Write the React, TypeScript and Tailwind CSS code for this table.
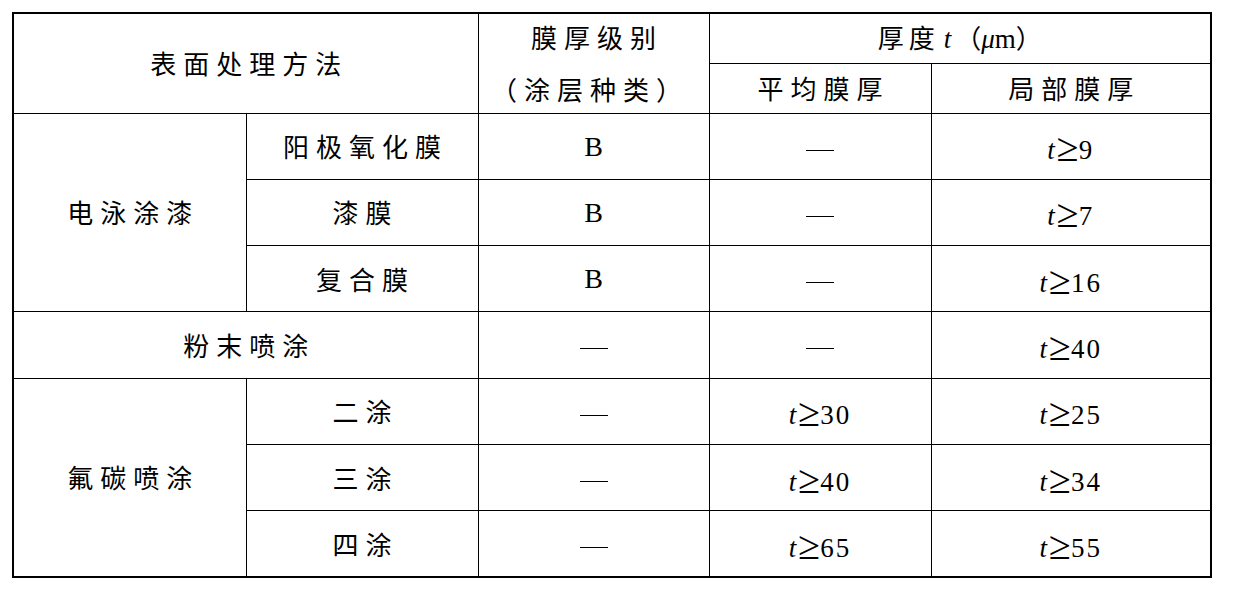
import React from 'react';

const CJK = '"Noto Sans CJK SC", "Liberation Serif", serif';

type Row = { name?: string; span?: number; sub?: string; level: string; avg: string; local: string; merged?: string };

const ROWS: Row[] = [
  { name: '电泳涂漆', span: 3, sub: '阳极氧化膜', level: 'B', avg: '—', local: '9' },
  { sub: '漆膜', level: 'B', avg: '—', local: '7' },
  { sub: '复合膜', level: 'B', avg: '—', local: '16' },
  { merged: '粉末喷涂', level: '—', avg: '—', local: '40' },
  { name: '氟碳喷涂', span: 3, sub: '二涂', level: '—', avg: '30', local: '25' },
  { sub: '三涂', level: '—', avg: '40', local: '34' },
  { sub: '四涂', level: '—', avg: '65', local: '55' },
];

function Ge({ n }: { n: string }) {
  if (n === '—') return <Dash />;
  return (
    <span className="inline-flex items-baseline font-['Liberation_Serif'] text-[27px] leading-none">
      <span className="italic">t</span>
      <span className="text-[40px] leading-none ml-[2px] translate-y-[2px]">≥</span>
      <span className="tracking-[2px]">{n}</span>
    </span>
  );
}

function Dash() {
  return <span className="inline-block w-[28px] h-[1px] bg-black align-middle" />;
}

function Cjk({ text }: { text: string }) {
  return <span className="tracking-[7px] mr-[-7px]">{text}</span>;
}

const cell = 'border border-black text-center align-middle p-0 font-normal';

export default function App() {
  return (
    <div className="bg-white w-[1249px] h-[589px] pt-[12px] pl-[12px]" style={{ fontFamily: CJK }}>
      <table className="border-collapse border-2 border-black text-[26px] text-black leading-none table-fixed w-[1198px]">
        <colgroup>
          <col className="w-[233px]" />
          <col className="w-[232px]" />
          <col className="w-[231px]" />
          <col className="w-[222px]" />
          <col className="w-[280px]" />
        </colgroup>
        <thead>
          <tr className="h-[50px]">
            <th rowSpan={2} colSpan={2} className={cell}><Cjk text="表面处理方法" /></th>
            <th rowSpan={2} className={cell}>
              <div className="flex flex-col items-center gap-[26px]">
                <Cjk text="膜厚级别" />
                <span className="tracking-[7px] mr-[-7px] ml-[-14px]">（涂层种类）</span>
              </div>
            </th>
            <th colSpan={2} className={cell}>
              <span className="tracking-[5px]">厚度</span>
              <span className="italic font-['Liberation_Serif'] text-[27px] ml-[4px]">t</span>
              <span className="ml-[4px]">（</span>
              <span className="italic font-['Liberation_Serif'] text-[27px]">μ</span>
              <span className="font-['Liberation_Serif'] text-[27px]">m</span>
              <span>）</span>
            </th>
          </tr>
          <tr className="h-[50px]">
            <th className={cell}><Cjk text="平均膜厚" /></th>
            <th className={cell}><Cjk text="局部膜厚" /></th>
          </tr>
        </thead>
        <tbody>
          {ROWS.map((r, i) => (
            <tr key={i} className="h-[66.3px]">
              {r.merged ? (
                <td colSpan={2} className={cell}><Cjk text={r.merged} /></td>
              ) : (
                <>
                  {r.name && <td rowSpan={r.span} className={cell}><Cjk text={r.name} /></td>}
                  <td className={cell}><Cjk text={r.sub!} /></td>
                </>
              )}
              <td className={cell}>
                {r.level === 'B' ? <span className="font-['Liberation_Serif'] text-[28px]">B</span> : <Dash />}
              </td>
              <td className={cell}><Ge n={r.avg} /></td>
              <td className={cell}><Ge n={r.local} /></td>
            </tr>
          ))}
        </tbody>
      </table>
    </div>
  );
}
